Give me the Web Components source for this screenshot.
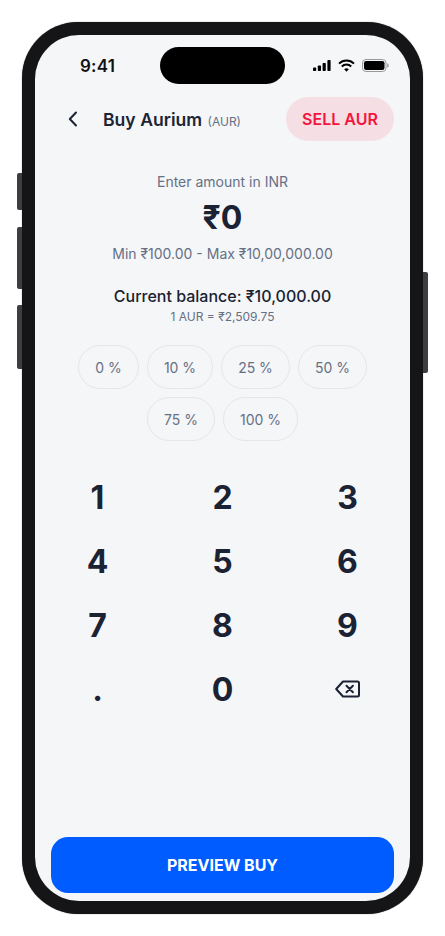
<!DOCTYPE html>
<html lang="en">
<head>
<meta charset="utf-8">
<title>Buy Aurium</title>
<style>
  html, body { margin: 0; padding: 0; background: #fff; }
  body { font-family: Inter, "Noto Sans", sans-serif; width: 445px; height: 936px; overflow: hidden; }
</style>
</head>
<body>
<phone-frame>
  <status-bar></status-bar>
  <buy-header title="Buy Aurium" code="(AUR)" action="SELL AUR"></buy-header>
  <amount-panel></amount-panel>
  <percent-chips></percent-chips>
  <num-pad></num-pad>
  <preview-button>PREVIEW BUY</preview-button>
</phone-frame>

<script>
class PhoneFrame extends HTMLElement {
  constructor() {
    super();
    this.attachShadow({ mode: "open" }).innerHTML = `
      <style>
        :host { display: block; position: relative; box-sizing: border-box; width: 401px; height: 892px; margin: 22px 0 0 22px;
                padding: 13px; background: #151517; border-radius: 56px; box-shadow: 0 0 1px #555; }
        .screen { display: flex; flex-direction: column; height: 866px; background: #f5f6f8; border-radius: 44px; overflow: hidden; }
        .side { position: absolute; width: 5px; background: #3e3e42; }
        .l { left: -5px; border-radius: 2px 0 0 2px; }
        .r { right: -5px; border-radius: 0 2px 2px 0; }
      </style>
      <div class="side l" style="top:151px;height:37px"></div>
      <div class="side l" style="top:205px;height:62px"></div>
      <div class="side l" style="top:283px;height:64px"></div>
      <div class="side r" style="top:250px;height:101px"></div>
      <div class="screen"><slot></slot></div>`;
  }
}

class StatusBar extends HTMLElement {
  constructor() {
    super();
    this.attachShadow({ mode: "open" }).innerHTML = `
      <style>
        :host { display: flex; align-items: center; justify-content: space-between; box-sizing: border-box; height: 37px; margin-top: 12px; padding: 0 21px 0 45px; position: relative; flex: none; }
        .time { font-size: 17px; font-weight: 600; color: #111; letter-spacing: .2px; }
        .island { position: absolute; left: 125px; top: 0; width: 125px; height: 37px; background: #000; border-radius: 19px; }
        .icons { display: flex; align-items: center; gap: 7px; }
        svg { display: block; }
      </style>
      <span class="time">9:41</span>
      <div class="island"></div>
      <div class="icons">
        <svg width="18" height="11" viewBox="0 0 18 11" fill="#000">
          <rect x="0" y="7.5" width="3.2" height="3.5" rx=".8"/><rect x="4.8" y="5.5" width="3.2" height="5.5" rx=".8"/>
          <rect x="9.6" y="3" width="3.2" height="8" rx=".8"/><rect x="14.4" y="0" width="3.2" height="11" rx=".8"/>
        </svg>
        <svg width="17" height="13" viewBox="0 0 17 13" fill="none" stroke="#000" stroke-width="2">
          <path d="M1 4.6a10.6 10.6 0 0 1 15 0"/><path d="M3.8 7.5a6.6 6.6 0 0 1 9.4 0"/>
          <path d="M8.5 12.8 6.2 10.3a3.3 3.3 0 0 1 4.6 0z" fill="#000" stroke="none"/>
        </svg>
        <svg width="27" height="13" viewBox="0 0 27 13">
          <rect x=".5" y=".5" width="23.5" height="12" rx="3.5" fill="none" stroke="#999"/>
          <rect x="2" y="2" width="20.5" height="9" rx="2.2" fill="#000"/>
          <path d="M25.2 4.3c1 .3 1.5 1.1 1.5 2.2s-.5 1.9-1.5 2.2z" fill="#999"/>
        </svg>
      </div>`;
  }
}

class BuyHeader extends HTMLElement {
  constructor() {
    super();
    this.attachShadow({ mode: "open" });
  }
  connectedCallback() {
    this.shadowRoot.innerHTML = `
      <style>
        :host { display: flex; align-items: center; box-sizing: border-box; height: 44px; margin-top: 13px; padding: 0 16px 0 33px; flex: none; }
        svg { display: block; flex: none; }
        h1 { margin: 0 0 0 25px; font-size: 17.6px; font-weight: 600; color: #1d2433; white-space: nowrap; }
        small { font-size: 12px; font-weight: 400; color: #667085; margin-left: 1px; }
        .sell { margin-left: auto; width: 108px; height: 44px; display: flex; align-items: center; justify-content: center; border-radius: 22px;
                background: #f5dfe5; color: #f4153c; font-size: 16px; font-weight: 600; }
      </style>
      <svg width="10" height="16" viewBox="0 0 10 16" fill="none" stroke="#1d2433" stroke-width="2" stroke-linecap="round" stroke-linejoin="round"><path d="M8 1.5 1.8 8 8 14.5"/></svg>
      <h1>${this.getAttribute("title")} <small>${this.getAttribute("code")}</small></h1>
      <div class="sell">${this.getAttribute("action")}</div>`;
  }
}

class AmountPanel extends HTMLElement {
  constructor() {
    super();
    this.attachShadow({ mode: "open" }).innerHTML = `
      <style>
        :host { display: flex; flex-direction: column; align-items: center; text-align: center; flex: none; margin-top: 31px; }
        div { white-space: nowrap; }
        .label { font-size: 14px; line-height: 20px; color: #667085; }
        .value { font-size: 32px; line-height: 40px; font-weight: 700; color: #1a2233; margin-top: 6px; }
        .range { font-size: 14px; line-height: 20px; color: #667085; margin-top: 6px; }
        .balance { font-size: 16px; line-height: 24px; font-weight: 500; color: #1a2233; margin-top: 20px; }
        .rate { font-size: 12px; line-height: 16px; color: #667085; margin-top: 1px; }
      </style>
      <div class="label">Enter amount in INR</div>
      <div class="value">₹0</div>
      <div class="range">Min ₹100.00 - Max ₹10,00,000.00</div>
      <div class="balance">Current balance: ₹10,000.00</div>
      <div class="rate">1 AUR = ₹2,509.75</div>`;
  }
}

class PercentChips extends HTMLElement {
  constructor() {
    super();
    const chips = [["0 %", 61], ["10 %", 66], ["25 %", 69], ["50 %", 69], ["75 %", 68], ["100 %", 75]];
    this.attachShadow({ mode: "open" }).innerHTML = `
      <style>
        :host { display: flex; flex-wrap: wrap; justify-content: center; gap: 8px; width: 300px; margin: 20px auto 0; flex: none; }
        span { display: flex; align-items: center; justify-content: center; box-sizing: border-box; height: 44px; border: 1px solid #e4e6ea; border-radius: 22px; font-size: 14px; color: #667085; }
      </style>
      ${chips.map(([t, w]) => `<span style="width:${w}px">${t}</span>`).join("")}`;
  }
}

class NumPad extends HTMLElement {
  constructor() {
    super();
    const keys = ["1","2","3","4","5","6","7","8","9",".","0"];
    this.attachShadow({ mode: "open" }).innerHTML = `
      <style>
        :host { display: grid; grid-template-columns: repeat(3, 1fr); grid-auto-rows: 64px; margin-top: 24px; flex: none; }
        div { display: flex; align-items: center; justify-content: center; font-size: 32px; font-weight: 700; color: #1a2233; }
        svg { display: block; }
      </style>
      ${keys.map(k => `<div>${k}</div>`).join("")}
      <div><svg width="25" height="18" viewBox="0 0 25 18" fill="none" stroke="#1a2233" stroke-width="2" stroke-linejoin="round" stroke-linecap="round">
        <path d="M8 1.5H22.5a1.5 1.5 0 0 1 1.5 1.5v12a1.5 1.5 0 0 1-1.5 1.5H8L1.2 9z"/>
        <path d="M11.5 5.8l6.4 6.4M17.9 5.8l-6.4 6.4"/>
      </svg></div>`;
  }
}

class PreviewButton extends HTMLElement {
  constructor() {
    super();
    this.attachShadow({ mode: "open" }).innerHTML = `
      <style>
        :host { display: flex; align-items: center; justify-content: center; height: 56px; margin: auto 16px 8px; background: #005cff; border-radius: 17px;
                color: #fff; font-size: 16px; font-weight: 700; flex: none; }
      </style>
      <slot></slot>`;
  }
}

customElements.define("phone-frame", PhoneFrame);
customElements.define("status-bar", StatusBar);
customElements.define("buy-header", BuyHeader);
customElements.define("amount-panel", AmountPanel);
customElements.define("percent-chips", PercentChips);
customElements.define("num-pad", NumPad);
customElements.define("preview-button", PreviewButton);
</script>
</body>
</html>
